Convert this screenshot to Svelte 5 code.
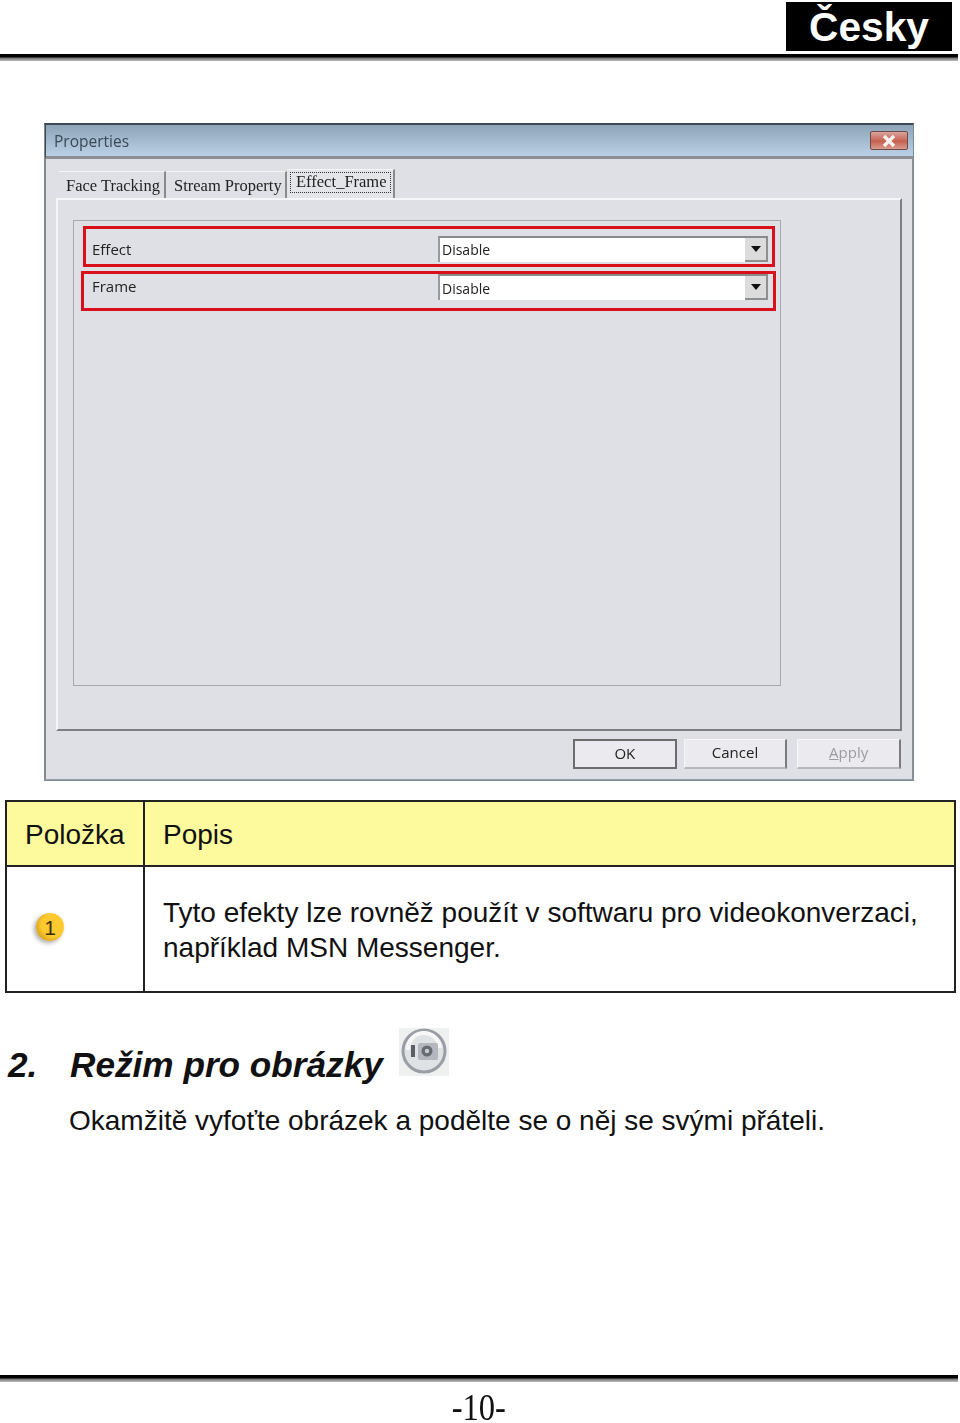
<script>
	const rows = [
		{ label: 'Effect', value: 'Disable' },
		{ label: 'Frame', value: 'Disable' }
	];
</script>

<div class="page">
	<header class="top">
		<div class="lang">Česky</div>
		<div class="rule"></div>
	</header>

	<section class="dialog">
		<div class="titlebar">
			<span class="title">Properties</span>
			<button class="close" aria-label="Close">
				<svg viewBox="0 0 20 14" width="20" height="14" aria-hidden="true">
					<path d="M5 2 L15 12 M15 2 L5 12" stroke="#f4f1ee" stroke-width="3.4" fill="none" />
				</svg>
			</button>
		</div>
		<div class="body">
			<div class="tabs">
				<span class="tab tab-face">Face Tracking</span>
				<span class="tab tab-stream">Stream Property</span>
				<span class="tab active"><span class="focus">Effect _Frame</span></span>
			</div>
			<div class="panel">
				<div class="group">
					{#each rows as row, i}
						<div class="row" class:second={i === 1}>
							<span class="label">{row.label}</span>
							<div class="select">
								<span>{row.value}</span>
								<span class="arrow">
									<svg viewBox="0 0 10 6" width="10" height="6" aria-hidden="true">
										<path d="M0 0 H10 L5 6 Z" fill="#111" />
									</svg>
								</span>
							</div>
						</div>
					{/each}
				</div>
			</div>
			<div class="buttons">
				<button class="btn ok">OK</button>
				<button class="btn cancel">Cancel</button>
				<button class="btn apply"><u>A</u>pply</button>
			</div>
		</div>
	</section>

	<table class="items">
		<thead>
			<tr>
				<th class="col-a">Položka</th>
				<th>Popis</th>
			</tr>
		</thead>
		<tbody>
			<tr>
				<td class="col-a">
					<span class="badge">1</span>
				</td>
				<td>Tyto efekty lze rovněž použít v softwaru pro videokonverzaci,<br />například MSN Messenger.</td>
			</tr>
		</tbody>
	</table>

	<div class="mode">
		<h2><span class="num">2.</span>Režim pro obrázky</h2>
		<svg class="cam" viewBox="0 0 50 48" width="50" height="48" aria-hidden="true">
			<rect width="50" height="48" fill="#eef1f0" />
			<circle cx="25" cy="23" r="21" fill="#dfe2e4" stroke="#9a9ea4" stroke-width="3" />
			<path d="M9 22 A16 16 0 0 1 41 20" fill="none" stroke="#f7f7f7" stroke-width="4" />
			<rect x="12" y="17" width="4" height="12" fill="#5a5f66" />
			<rect x="19" y="15" width="20" height="17" rx="2" fill="#b4b8be" />
			<circle cx="28" cy="23" r="5.5" fill="#666b72" />
			<circle cx="28" cy="23" r="2.2" fill="#c9ccd0" />
		</svg>
	</div>
	<p class="desc">Okamžitě vyfoťte obrázek a podělte se o něj se svými přáteli.</p>

	<footer class="bottom">
		<div class="rule"></div>
		<div class="pageno"><span>-10-</span></div>
	</footer>
</div>

<style>
	:global(body) {
		margin: 0;
		background: #fff;
	}

	.page {
		width: 960px;
		height: 1423px;
		display: flex;
		flex-direction: column;
		font-family: "Liberation Sans", Arial, sans-serif;
		color: #111;
	}

	.top {
		padding-top: 2px;
	}

	.lang {
		width: 166px;
		height: 49px;
		box-sizing: border-box;
		padding-top: 2px;
		margin-left: 786px;
		background: #000;
		color: #fff;
		font-size: 40.7px;
		font-weight: 700;
		line-height: 47px;
		text-align: center;
	}

	.rule {
		width: 958px;
		height: 7px;
		margin-top: 3px;
		background: linear-gradient(#000 0, #000 40%, #777 60%, #bbb 100%);
	}

	.dialog {
		width: 870px;
		height: 658px;
		box-sizing: border-box;
		margin: 62px 0 0 44px;
		border: 1px solid #7d8a97;
		border-top: 2px solid #3c4a58;
		background: #dfe0e5;
		display: flex;
		flex-direction: column;
		font-family: "Open Sans", "Noto Sans", sans-serif;
		filter: blur(0.4px);
	}

	.titlebar {
		height: 34px;
		flex: none;
		box-sizing: border-box;
		display: flex;
		align-items: center;
		justify-content: space-between;
		padding: 0 5px 0 8px;
		background: linear-gradient(#8ea5b8, #b9d0e6);
		border-bottom: 3px solid #8b8f94;
		border-left: 1px solid #444;
	}

	.title {
		font-size: 15.5px;
		color: #3a4956;
	}

	.close {
		width: 38px;
		height: 19px;
		padding: 0;
		display: flex;
		align-items: center;
		justify-content: center;
		background: linear-gradient(#d9a39c, #c8604e 55%, #d99c90);
		border: 1px solid #6e4a48;
		border-radius: 2px;
	}

	.body {
		flex: 1;
		display: flex;
		flex-direction: column;
		padding: 9px 11px 0 10px;
		border-left: 1px solid #888;
		border-right: 1px solid #8a9099;
		border-bottom: 1px solid #9a9ea5;
	}

	.tabs {
		height: 30px;
		flex: none;
		display: flex;
		align-items: flex-end;
		padding-left: 3px;
		font-family: "Liberation Serif", serif;
		font-size: 16.5px;
		color: #222;
	}

	.tab {
		height: 27px;
		box-sizing: border-box;
		padding: 4px 0 0 7px;
		border-right: 2px solid #8a8a8a;
		border-top: 1px solid #f4f4f4;
		white-space: nowrap;
	}

	.tab-face {
		width: 107px;
	}

	.tab-stream {
		width: 121px;
		padding-left: 8px;
	}

	.tab.active {
		height: 29px;
		width: 108px;
		padding: 2px 0 0 3px;
		background: #e4e5e9;
	}

	.focus {
		display: block;
		width: 101px;
		height: 21px;
		line-height: 17px;
		box-sizing: border-box;
		padding: 0 0 0 5px;
		border: 1px dotted #333;
		word-spacing: -4px;
	}

	.panel {
		height: 533px;
		width: 846px;
		flex: none;
		box-sizing: border-box;
		padding: 20px 0 0 15px;
		border-top: 2px solid #f6f6f8;
		border-left: 2px solid #f6f6f8;
		border-right: 2px solid #7b7f85;
		border-bottom: 2px solid #7b7f85;
	}

	.group {
		width: 708px;
		height: 466px;
		box-sizing: border-box;
		border: 1px solid #a5a8ad;
		padding: 5px 0 0 8px;
	}

	.row {
		width: 692px;
		height: 41px;
		box-sizing: border-box;
		margin-left: 1px;
		border: 3px solid #d8101c;
		display: flex;
		align-items: center;
		font-size: 15px;
		color: #222;
		padding: 4px 4px 0 6px;
	}

	.row.second {
		width: 695px;
		height: 40px;
		margin: 4px 0 0 -1px;
		align-items: flex-start;
		padding: 0 5px 0 8px;
	}

	.row.second .label {
		margin-top: 2px;
	}

	.label {
		width: 346px;
		flex: none;
	}

	.select {
		width: 330px;
		height: 26px;
		flex: none;
		box-sizing: border-box;
		display: flex;
		align-items: center;
		justify-content: space-between;
		background: #fff;
		border-top: 2px solid #8a8a8a;
		border-left: 2px solid #9a9a9a;
		padding-left: 2px;
		font-size: 14px;
	}

	.arrow {
		width: 23px;
		height: 24px;
		display: flex;
		align-items: center;
		justify-content: center;
		background: #dcdcdc;
		border-right: 2px solid #8f8f8f;
		border-bottom: 2px solid #8f8f8f;
		box-sizing: border-box;
	}

	.buttons {
		display: flex;
		padding: 8px 0 0 517px;
	}

	.btn {
		width: 104px;
		height: 30px;
		padding: 0 0 3px;
		background: #ebebef;
		font-family: "Open Sans", "Noto Sans", sans-serif;
		font-size: 15px;
		color: #222;
		border: none;
		border-right: 2px solid #7b7b7b;
		border-bottom: 2px solid #b8b8bc;
		border-top: 1px solid #f6f6f6;
		border-left: 1px solid #f6f6f6;
	}

	.ok {
		border: 2px solid #6c6c6c;
	}

	.cancel {
		margin-left: 7px;
	}

	.apply {
		margin-left: 10px;
		color: #9c9ca0;
	}

	.items {
		width: 951px;
		height: 192px;
		margin: 19px 0 0 5px;
		border-collapse: collapse;
		font-size: 28px;
		table-layout: fixed;
	}

	.items th,
	.items td {
		box-sizing: border-box;
		border: 2px solid #222;
		padding: 2px 0 0 18px;
		font-weight: 400;
		text-align: left;
	}

	.items th {
		height: 65px;
		background: #fdfa9e;
	}

	.items td {
		line-height: 35px;
		height: 126px;
	}

	.items .col-a {
		width: 138px;
		padding-left: 18px;
	}

	.badge {
		width: 28px;
		height: 28px;
		margin-left: 11px;
		display: flex;
		align-items: center;
		justify-content: center;
		border-radius: 50%;
		background: radial-gradient(circle at 62% 42%, #fcc92e 50%, #b87d10 100%);
		box-shadow: -2px 2px 4px rgba(70, 70, 70, 0.45);
		font-size: 21px;
		color: #3d2e0a;
		position: relative;
		top: -3px;
	}

	.mode {
		display: flex;
		align-items: flex-start;
		margin-top: 35px;
		padding-left: 8px;
	}

	h2 {
		margin: 16px 0 0 0;
		font-size: 35.2px;
		line-height: 42px;
		font-weight: 700;
		font-style: italic;
		color: #111;
	}

	.num {
		display: inline-block;
		width: 62px;
	}

	.cam {
		margin-left: 16px;
		flex: none;
		filter: blur(0.6px);
	}

	.desc {
		margin: 18px 0 0 69px;
		font-size: 28px;
		line-height: 34px;
	}

	.bottom {
		margin-top: auto;
	}

	.bottom .rule {
		margin: 0;
	}

	.pageno {
		font-family: "Liberation Serif", serif;
		font-size: 37px;
		line-height: 31px;
		margin-top: 10px;
		height: 31px;
		text-align: center;
		padding-right: 2px;
		color: #111;
	}

	.pageno span {
		display: inline-block;
		transform: scaleX(0.88);
	}
</style>
